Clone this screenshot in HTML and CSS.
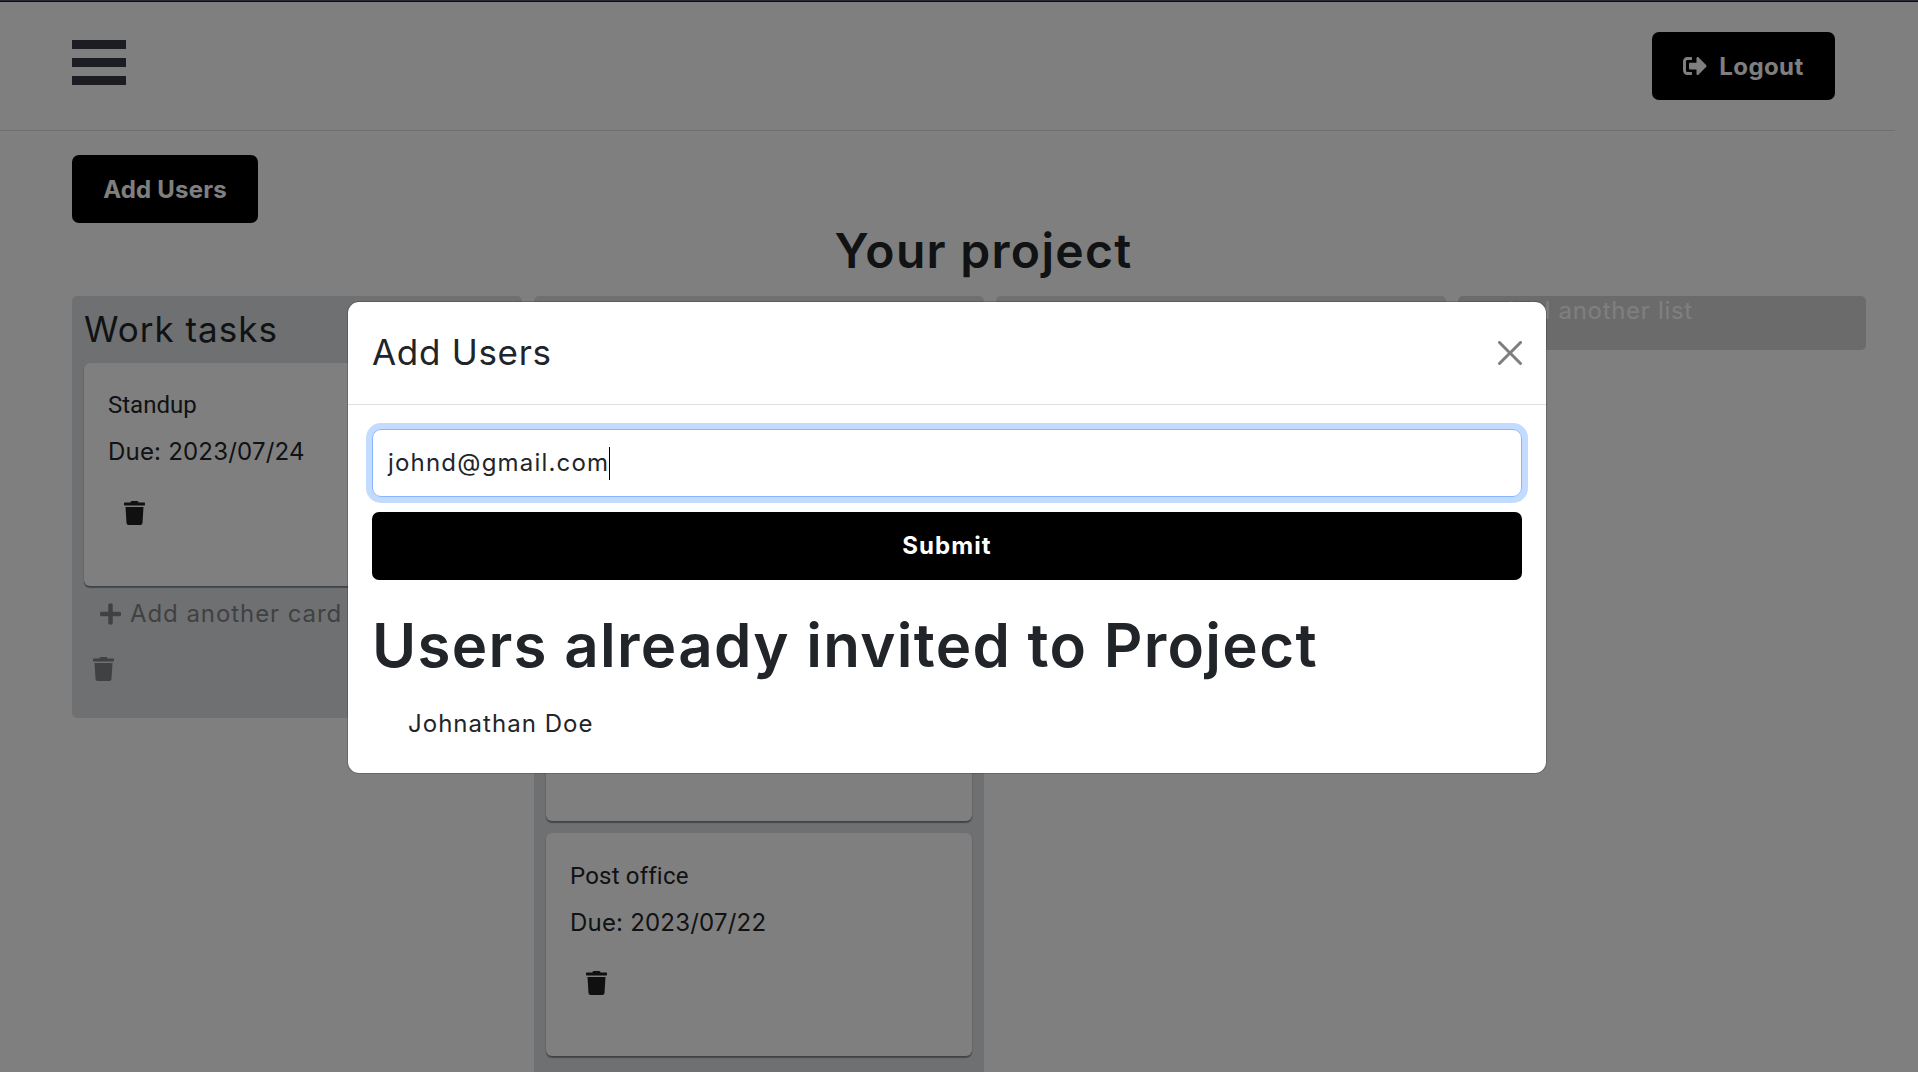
FILE: index.html
```html
<!DOCTYPE html>
<html lang="en">
<head>
<meta charset="utf-8">
<title>Your project</title>
<link rel="stylesheet" href="styles.css">
</head>
<body>
<svg class="sprite" aria-hidden="true">
  <symbol id="trash" viewBox="0 0 448 512"><path d="M432 32H312l-9.400-18.700A24 24 0 0 0 281.100 0H166.800a23.720 23.720 0 0 0-21.400 13.300L136 32H16A16 16 0 0 0 0 48v32a16 16 0 0 0 16 16h416a16 16 0 0 0 16-16V48a16 16 0 0 0-16-16zM53.200 467a48 48 0 0 0 47.900 45h245.800a48 48 0 0 0 47.900-45L416 128H32z"/></symbol>
  <symbol id="plus" viewBox="0 0 448 512"><path d="M416 208H272V64c0-17.670-14.330-32-32-32h-32c-17.670 0-32 14.330-32 32v144H32c-17.670 0-32 14.330-32 32v32c0 17.670 14.330 32 32 32h144v144c0 17.670 14.330 32 32 32h32c17.670 0 32-14.330 32-32V304h144c17.670 0 32-14.330 32-32v-32c0-17.670-14.330-32-32-32z"/></symbol>
</svg>
<div class="page">
  <header class="topbar">
    <div class="burger"><span></span><span></span><span></span></div>
    <button class="btn logout">
      <svg width="24" height="24" viewBox="0 0 512 512"><path d="M497 273L329 441c-15 15-41 4.500-41-17v-96H152c-13.300 0-24-10.700-24-24v-96c0-13.300 10.700-24 24-24h136V88c0-21.400 25.900-32 41-17l168 168c9.300 9.400 9.300 24.600 0 34zM192 436v-40c0-6.600-5.400-12-12-12H96c-17.700 0-32-14.300-32-32V160c0-17.700 14.300-32 32-32h84c6.600 0 12-5.400 12-12V76c0-6.600-5.400-12-12-12H96c-53 0-96 43-96 96v192c0 53 43 96 96 96h84c6.600 0 12-5.400 12-12z"/></svg>
      <span>Logout</span>
    </button>
  </header>
  <main class="project">
    <button class="btn add-users">Add Users</button>
    <h1 class="title">Your project</h1>
    <div class="board">
      <section class="list">
        <h2 class="list-title">Work tasks</h2>
        <article class="card">
          <p class="card-name">Standup</p>
          <p class="card-due">Due: 2023/07/24</p>
          <svg class="card-trash" width="21" height="24"><use href="#trash"/></svg>
        </article>
        <div class="add-card"><svg width="21" height="24"><use href="#plus"/></svg><span>Add another card</span></div>
        <svg class="list-trash" width="21" height="24"><use href="#trash"/></svg>
      </section>
      <section class="list list-long">
        <h2 class="list-title"></h2>
        <article class="card"></article>
        <article class="card"></article>
        <article class="card card-last">
          <p class="card-name wide">Post office</p>
          <p class="card-due">Due: 2023/07/22</p>
          <svg class="card-trash" width="21" height="24"><use href="#trash"/></svg>
        </article>
      </section>
      <section class="list list-empty"></section>
      <div class="add-list">Add another list</div>
    </div>
  </main>
</div>
<div class="backdrop">
  <div class="modal" role="dialog">
    <div class="modal-head">
      <h2 class="modal-title">Add Users</h2>
      <svg class="close" width="24" height="24" viewBox="0 0 16 16"><path d="M.293.293a1 1 0 0 1 1.414 0L8 6.586 14.293.293a1 1 0 1 1 1.414 1.414L9.414 8l6.293 6.293a1 1 0 0 1-1.414 1.414L8 9.414l-6.293 6.293a1 1 0 0 1-1.414-1.414L6.586 8 .293 1.707a1 1 0 0 1 0-1.414z"/></svg>
    </div>
    <div class="modal-body">
      <div class="field"><span class="email">johnd@gmail.com</span><span class="caret"></span></div>
      <button class="btn submit">Submit</button>
      <h1 class="invited">Users already invited to Project</h1>
      <p class="user">Johnathan Doe</p>
    </div>
  </div>
</div>
<div class="edge"></div>
</body>
</html>
```
FILE: styles.css
```css
* { box-sizing: border-box; }
body {
  margin: 0;
  height: 1072px;
  overflow: hidden;
  background: #fff;
  color: #212529;
  font: 400 24px/36px Inter, "Open Sans", sans-serif;
}
h1, h2, p { margin: 0; }
.sprite { position: absolute; width: 0; height: 0; }
.page { height: 1072px; overflow: hidden; }

.topbar {
  width: 1895px;
  height: 131px;
  padding: 32px 60px 0 72px;
  display: flex;
  justify-content: space-between;
  align-items: flex-start;
  border-bottom: 1px solid #dedede;
}
.burger { display: grid; gap: 9px; padding-top: 8px; }
.burger span { width: 54px; height: 9px; background: #373a47; }

.btn {
  height: 68px;
  border: 0;
  border-radius: 7px;
  background: #000;
  color: #fff;
  font: 700 24px/36px Inter, "Open Sans", sans-serif;
  display: flex;
  align-items: center;
  justify-content: center;
  padding: 0;
}
.btn svg { fill: #fff; }
.logout { width: 183px; gap: 12px; letter-spacing: .4px; }
.logout span, .add-users { padding-top: 1px; }
.add-users { width: 186px; letter-spacing: .2px; }

.project { padding: 24px 0 0 72px; width: 1895px; }
.title {
  font-size: 48px;
  font-weight: 600;
  line-height: 56px;
  letter-spacing: 1.3px;
  text-align: center;
  margin-bottom: 17px;
}
.board { display: flex; gap: 12px; align-items: flex-start; }
.list {
  flex: none;
  width: 450px;
  height: 422px;
  padding: 12px;
  border-radius: 5px;
  background: #dfe1e5;
}
.list-long { height: 840px; }
.list-title {
  height: 42px;
  margin-bottom: 13px;
  font-size: 35px;
  font-weight: 400;
  line-height: 42px;
  letter-spacing: 1px;
}
.card {
  width: 426px;
  height: 223px;
  padding: 24px;
  border-radius: 6px;
  background: #fff;
  box-shadow: 0 1px 2px rgba(9, 30, 66, .25), 0 2px 1px rgba(0, 0, 0, .3);
}
.card + .card { margin-top: 12px; }
.card-last { padding-top: 25px; }
.card-last .card-trash { margin-top: -1px; }
.card-name { font-family: Roboto, sans-serif; margin-bottom: 11px; }
.wide { letter-spacing: .2px; }
.card-due { letter-spacing: .2px; margin-bottom: 31px; }
.card-trash { display: block; margin-left: 16px; fill: #212121; }
.add-card {
  display: flex;
  align-items: center;
  gap: 9px;
  margin: 10px 0 0 16px;
  letter-spacing: .93px;
  color: #818285;
}
.add-card svg, .list-trash { fill: #818285; }
.list-trash { display: block; margin: 25px 0 0 9px; }
.add-list {
  width: 408px;
  height: 54px;
  padding-left: 45px;
  line-height: 30px;
  border-radius: 5px;
  background: #d7d7d7;
  color: #fff;
  letter-spacing: .7px;
}

.backdrop {
  position: absolute;
  inset: 0;
  display: flex;
  justify-content: center;
  align-items: flex-start;
  padding: 301px 24px 0 0;
  background: rgba(0, 0, 0, .5);
}
.modal {
  width: 1200px;
  height: 473px;
  border: 1px solid rgba(0, 0, 0, .175);
  border-radius: 12px;
  background: #fff;
  background-clip: padding-box;
}
.modal-head {
  height: 103px;
  padding: 0 24px;
  display: flex;
  justify-content: space-between;
  align-items: center;
  border-bottom: 1px solid #dee2e6;
}
.modal-title { font-size: 35px; font-weight: 400; line-height: 52px; letter-spacing: .7px; padding-bottom: 2px; }
.close { opacity: .5; }
.modal-body { padding: 24px; }
.field {
  height: 68px;
  display: flex;
  align-items: center;
  padding: 0 15px;
  border: 1px solid #86b7fe;
  border-radius: 9px;
  box-shadow: 0 0 0 6px #c2dbfe;
}
.email { letter-spacing: 1.2px; }
.caret { width: 1px; height: 33px; background: #000; }
.submit { width: 100%; margin-top: 15px; letter-spacing: 1.08px; }
.invited {
  margin-top: 29px;
  font-size: 60px;
  font-weight: 600;
  line-height: 72px;
  letter-spacing: 1.3px;
  white-space: nowrap;
}
.user { margin: 25px 0 0 36px; letter-spacing: 1.03px; }

.edge {
  position: absolute;
  inset: 0 0 auto;
  height: 2px;
  background: #2b2a33;
  border-bottom: 1px solid #0c0c0d;
}
```
